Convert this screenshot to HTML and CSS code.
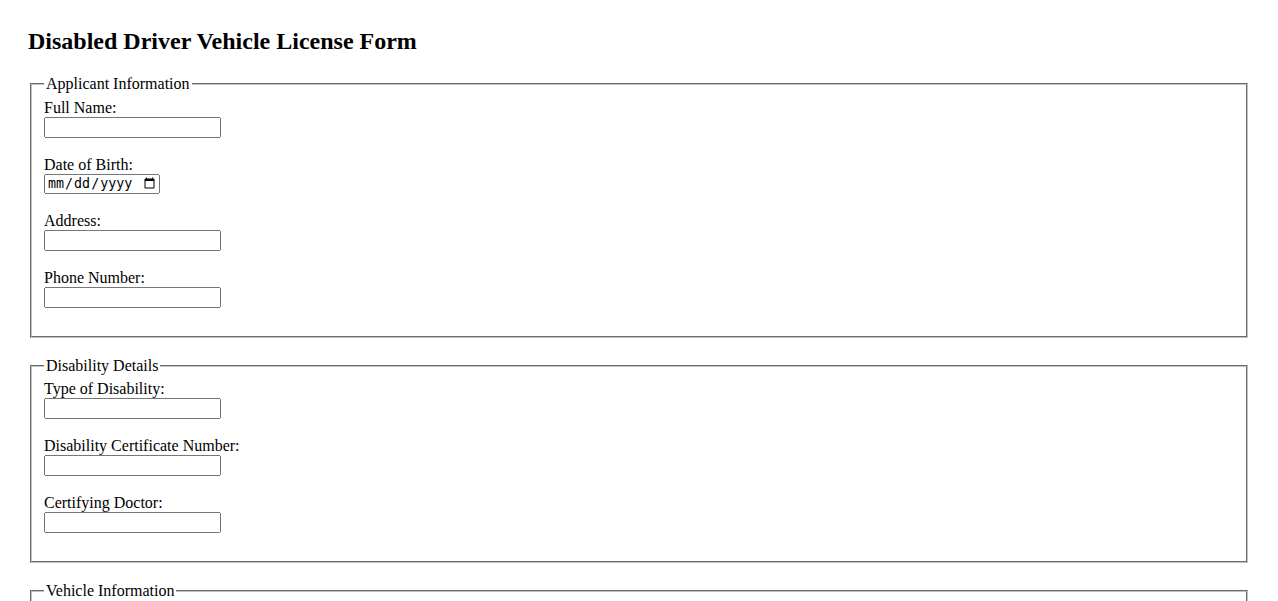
FILE: index.html
```html
<!DOCTYPE html>
<html lang="en">
<head>
  <meta charset="UTF-8">
  <meta name="viewport" content="width=device-width, initial-scale=1.0">
  <title>Disabled Driver Vehicle License Form</title>
  <link rel="stylesheet" href="styles.css">
</head>
<body>
  <h2>Disabled Driver Vehicle License Form</h2>

  <form id="licenseForm">
    <!-- Applicant -->
    <fieldset>
      <legend>Applicant Information</legend>
      <label for="fullName">Full Name:</label><br>
      <input type="text" id="fullName" name="fullName" class="text-input"><br><br>

      <label for="dob">Date of Birth:</label><br>
      <input type="date" id="dob" name="dob" class="date-input"><br><br>

      <label for="address">Address:</label><br>
      <input type="text" id="address" name="address" class="text-input"><br><br>

      <label for="phone">Phone Number:</label><br>
      <input type="tel" id="phone" name="phone" class="text-input"><br><br>
    </fieldset>

    <!-- Disability -->
    <fieldset>
      <legend>Disability Details</legend>
      <label for="disabilityType">Type of Disability:</label><br>
      <input type="text" id="disabilityType" name="disabilityType" class="text-input"><br><br>

      <label for="certNumber">Disability Certificate Number:</label><br>
      <input type="text" id="certNumber" name="certNumber" class="text-input"><br><br>

      <label for="doctor">Certifying Doctor:</label><br>
      <input type="text" id="doctor" name="doctor" class="text-input"><br><br>
    </fieldset>

    <!-- Vehicle -->
    <fieldset>
      <legend>Vehicle Information</legend>
      <label for="make">Vehicle Make:</label><br>
      <input type="text" id="make" name="make" class="text-input"><br><br>

      <label for="model">Vehicle Model:</label><br>
      <input type="text" id="model" name="model" class="text-input"><br><br>

      <label for="plate">Registration Number:</label><br>
      <input type="text" id="plate" name="plate" class="text-input"><br><br>
    </fieldset>

    <button type="submit">Submit Application</button>
  </form>
</body>
</html>
```

FILE: styles.css
```css
/* General */
body {
  font-family: "Liberation Serif", "Times New Roman", serif;
  font-size: 16px;
  margin: 28px;
  color: #000;
  background-color: #fff;
}

h2 {
  font-size: 24px;
  margin: 0 0 19.92px;
}

/* Form sections */
fieldset {
  margin: 0 2px 19px;
  padding: 0.35em 0.75em 0.625em;
  border: 2px groove #c0c0c0;
}

legend {
  padding: 0 2px;
}

.text-input {
  box-sizing: border-box;
  width: 177px;
  height: 21px;
}

.date-input {
  box-sizing: border-box;
  width: 116px;
  height: 20px;
}
```
